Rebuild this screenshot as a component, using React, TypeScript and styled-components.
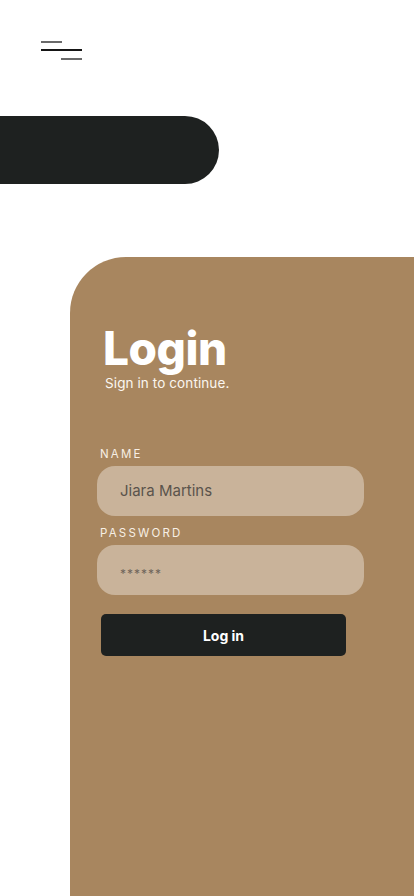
import React from 'react';
import styled, { createGlobalStyle } from 'styled-components';

const GlobalStyle = createGlobalStyle`
  * { box-sizing: border-box; }
  html, body {
    margin: 0;
    padding: 0;
    background: #ffffff;
    font-family: 'Inter', 'Liberation Sans', sans-serif;
  }
`;

const Page = styled.div`
  min-height: 896px;
  display: flex;
  flex-direction: column;
  background: #ffffff;
  overflow: hidden;
`;

const MenuButton = styled.button`
  align-self: flex-start;
  margin: 41px 0 0 41px;
  padding: 0;
  border: none;
  background: none;
  width: 41px;
  display: flex;
  flex-direction: column;
  cursor: pointer;
`;

const MenuLine = styled.span<{ $width: number; $align: 'start' | 'end'; $dark?: boolean }>`
  display: block;
  width: ${p => p.$width}px;
  height: 2px;
  align-self: ${p => (p.$align === 'end' ? 'flex-end' : 'flex-start')};
  background: ${p => (p.$dark ? '#151515' : '#6a6a6a')};
  margin-bottom: 6px;
  &:last-child { margin-bottom: 0; }
  &:nth-child(2) { margin-bottom: 7px; }
`;

const DarkBar = styled.div`
  width: 219px;
  height: 68px;
  margin-top: 56px;
  background: #1e2120;
  border-radius: 0 34px 34px 0;
`;

const Card = styled.section`
  flex: 1;
  margin: 73px 0 0 70px;
  background: #a8865f;
  border-top-left-radius: 56px;
  padding: 68px 50px 40px 27px;
  display: flex;
  flex-direction: column;
`;

const Title = styled.h1`
  margin: 0 0 0 6px;
  font-size: 46px;
  line-height: 46px;
  font-weight: 800;
  letter-spacing: -0.5px;
  color: #ffffff;
`;

const Subtitle = styled.p`
  margin: 4px 0 0 8px;
  font-size: 13.5px;
  line-height: 16px;
  letter-spacing: 0.1px;
  color: #fbf6f0;
`;

const Form = styled.form`
  margin-top: 56px;
  display: flex;
  flex-direction: column;
`;

const Label = styled.label`
  margin: 0 0 5px 3px;
  font-size: 11.5px;
  line-height: 14px;
  letter-spacing: 2.2px;
  color: #f7efe5;
  font-weight: 400;
`;

const Field = styled.input<{ $secret?: boolean }>`
  width: 267px;
  height: 50px;
  border: none;
  outline: none;
  border-radius: 18px;
  background: #c9b39a;
  padding: ${p => (p.$secret ? '6px 0 0 23px' : '0 0 2px 23px')};
  font-family: 'Inter', 'Liberation Sans', sans-serif;
  font-size: ${p => (p.$secret ? '12px' : '15px')};
  letter-spacing: ${p => (p.$secret ? '1px' : '0')};
  color: ${p => (p.$secret ? '#6e645a' : '#5a534c')};
  margin-bottom: 10px;
`;

const SubmitButton = styled.button`
  margin: 9px 0 0 4px;
  width: 245px;
  height: 42px;
  border: none;
  border-radius: 5px;
  background: #1e2120;
  color: #ffffff;
  font-family: 'Inter', 'Liberation Sans', sans-serif;
  font-size: 14px;
  font-weight: 700;
  cursor: pointer;
`;

const App = () => {
  return (
    <Page>
      <GlobalStyle />
      <MenuButton aria-label="menu">
        <MenuLine $width={21} $align="start" />
        <MenuLine $width={41} $align="start" $dark />
        <MenuLine $width={21} $align="end" />
      </MenuButton>
      <DarkBar />
      <Card>
        <Title>Login</Title>
        <Subtitle>Sign in to continue.</Subtitle>
        <Form onSubmit={e => e.preventDefault()}>
          <Label htmlFor="name">NAME</Label>
          <Field id="name" defaultValue="Jiara Martins" />
          <Label htmlFor="password">PASSWORD</Label>
          <Field id="password" $secret defaultValue="******" />
          <SubmitButton type="submit">Log in</SubmitButton>
        </Form>
      </Card>
    </Page>
  );
};

export default App;
